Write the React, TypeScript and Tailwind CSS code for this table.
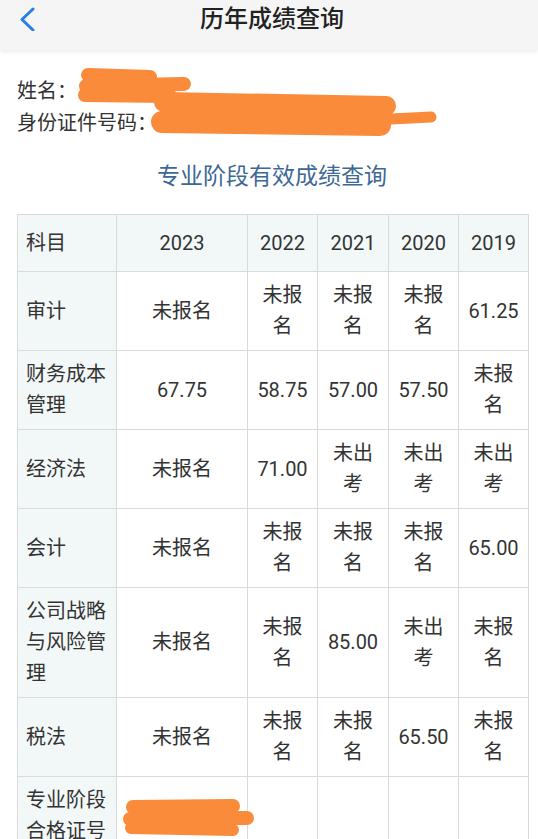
import React from "react";

type Row = {
  subject: string;
  scores: string[];
};

const years = ["2023", "2022", "2021", "2020", "2019"];

const rows: Row[] = [
  { subject: "审计", scores: ["未报名", "未报名", "未报名", "未报名", "61.25"] },
  { subject: "财务成本管理", scores: ["67.75", "58.75", "57.00", "57.50", "未报名"] },
  { subject: "经济法", scores: ["未报名", "71.00", "未出考", "未出考", "未出考"] },
  { subject: "会计", scores: ["未报名", "未报名", "未报名", "未报名", "65.00"] },
  { subject: "公司战略与风险管理", scores: ["未报名", "未报名", "85.00", "未出考", "未报名"] },
  { subject: "税法", scores: ["未报名", "未报名", "未报名", "65.50", "未报名"] },
];

const ORANGE = "#f98b3b";

function BackIcon() {
  return (
    <svg width="16" height="24" viewBox="0 0 16 24" fill="none">
      <polyline
        points="14,2 3,12.5 14,23"
        stroke="#2a7ee3"
        strokeWidth="3"
        strokeLinecap="round"
        strokeLinejoin="round"
      />
    </svg>
  );
}

function App() {
  const cell = "border border-[#dadada] px-2 py-2 align-middle";
  const headCell = "border border-[#dadada] px-2 h-[57px] align-middle font-normal bg-[#f2f8f8]";

  return (
    <div
      className="min-h-[839px] bg-white text-[#333] overflow-hidden"
      style={{ fontFamily: "Roboto, 'Noto Sans CJK SC', sans-serif" }}
    >
      <div className="relative h-[50px] bg-[#f5f5f5] shadow-[0_2px_4px_rgba(0,0,0,0.08)] flex items-center justify-center">
        <div className="absolute left-[19px] top-[7px]">
          <BackIcon />
        </div>
        <h1 className="text-[24px] font-medium text-[#222] leading-none ml-[6px] -mt-[12px]">历年成绩查询</h1>
      </div>

      <div className="relative mt-[25px] pl-[17px] text-[20px] leading-[32px]">
        <div>姓名：</div>
        <div>身份证件号码：</div>
        <svg
          className="absolute left-0 top-0 overflow-visible"
          width="538"
          height="70"
          viewBox="0 0 538 70"
        >
          <g stroke={ORANGE} strokeLinecap="round" strokeLinejoin="round" fill={ORANGE}>
            <path d="M88 0 L150 2" strokeWidth="14" />
            <path d="M86 11 L184 9" strokeWidth="14" />
            <path d="M85 20 L170 21" strokeWidth="14" />
            <path d="M164 27 L386 31" strokeWidth="20" />
            <path d="M162 47 L380 50" strokeWidth="22" />
            <path d="M170 38 L380 40" strokeWidth="20" />
            <path d="M372 45 L431 42" strokeWidth="11" />
          </g>
        </svg>
      </div>

      <h2 className="mt-[22px] text-center text-[23px] leading-[32px] text-[#3d6896] ml-[6px]">
        专业阶段有效成绩查询
      </h2>

      <table className="mt-[21px] ml-[17px] w-[511px] table-fixed border-collapse text-[20px] leading-[31px]">
        <colgroup>
          <col className="w-[99px]" />
          <col className="w-[131px]" />
          <col className="w-[70px]" />
          <col className="w-[71px]" />
          <col className="w-[70px]" />
          <col className="w-[70px]" />
        </colgroup>
        <thead>
          <tr>
            <th className={`${headCell} text-left`}>科目</th>
            {years.map((y) => (
              <th key={y} className={`${headCell} text-center`}>
                {y}
              </th>
            ))}
          </tr>
        </thead>
        <tbody>
          {rows.map((r) => (
            <tr key={r.subject}>
              <td className={`${cell} text-left bg-[#f2f8f8]`}>{r.subject}</td>
              {r.scores.map((s, i) => (
                <td key={i} className={`${cell} text-center`}>
                  {s}
                </td>
              ))}
            </tr>
          ))}
          <tr>
            <td className={`${cell} text-left bg-[#f2f8f8]`}>专业阶段合格证号</td>
            <td className={`${cell} relative`}>
              <svg className="absolute left-[4px] top-[22px] overflow-visible" width="130" height="38" viewBox="0 0 130 38">
                <g stroke={ORANGE} strokeLinecap="round" fill="none">
                  <path d="M12 8 L112 7" strokeWidth="14" />
                  <path d="M9 20 L126 19" strokeWidth="14" />
                  <path d="M10 29 L112 31" strokeWidth="12" />
                </g>
              </svg>
            </td>
            <td className={cell}></td>
            <td className={cell}></td>
            <td className={cell}></td>
            <td className={cell}></td>
          </tr>
        </tbody>
      </table>
    </div>
  );
}

export default App;
